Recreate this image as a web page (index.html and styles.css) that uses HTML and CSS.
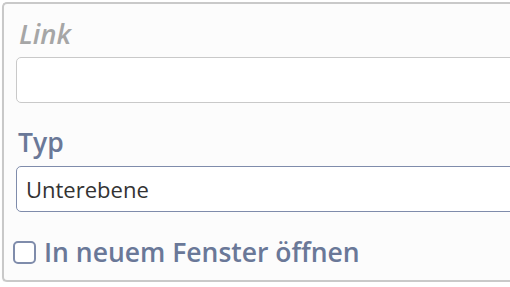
FILE: index.html
```html
<!DOCTYPE html>
<html>
<head>
  <link rel="stylesheet" href="styles.css">
</head>
<body>
  <div class="panel">
    <div class="form-group">
      <label class="label label-muted" for="link">Link</label>
      <input type="text" id="link" class="field">
    </div>

    <div class="form-group group-type">
      <label class="label" for="type">Typ</label>
      <div class="field field-select" id="type">Unterebene</div>
    </div>

    <div class="check-row">
      <span class="checkbox"></span>
      <span class="check-label">In neuem Fenster öffnen</span>
    </div>
  </div>
</body>
</html>
```

FILE: styles.css
```css
:root {
  --label-color: #6a7898;
  --muted-color: #a6a6a6;
  --border-light: #c9c9c9;
  --border-accent: #7f8cab;
}

body {
  margin: 0;
  font-family: "Open Sans", sans-serif;
  background: #ffffff;
  overflow: hidden;
}
.panel {
  margin: 2px 0 0 2px;
  width: 560px;
  border: 2px solid #c9c9c9;
  border-right: none;
  border-radius: 5px 0 0 5px;
  background: #fcfcfc;
  padding: 14px 0 12px 12px;
  box-shadow: 0 1px 1px rgba(0, 0, 0, 0.08);
}
.form-group {
  display: flex;
  flex-direction: column;
  gap: 7px;
}
.group-type {
  margin-top: 23px;
  gap: 8px;
}
.label {
  font-size: 26.5px;
  line-height: 32px;
  font-weight: 600;
  color: var(--label-color);
  padding-left: 2px;
}
.label-muted {
  font-size: 27.5px;
  font-style: italic;
  color: var(--muted-color);
  padding-left: 3px;
}
.field {
  box-sizing: border-box;
  height: 46px;
  border: 1px solid var(--border-light);
  border-radius: 5px;
  background: #ffffff;
  font-family: inherit;
  font-size: 22px;
  color: #333333;
  padding: 0 9px;
  outline: none;
}
.field-select {
  display: flex;
  align-items: center;
  border-color: var(--border-accent);
}
.check-row {
  display: flex;
  align-items: center;
  gap: 8px;
  margin-top: 24px;
  margin-left: -3px;
}
.checkbox {
  box-sizing: border-box;
  width: 23px;
  height: 23px;
  border: 2px solid var(--border-accent);
  border-radius: 5px;
  background: #ffffff;
}
.check-label {
  font-size: 26.5px;
  line-height: 32px;
  font-weight: 600;
  color: var(--label-color);
}
```
